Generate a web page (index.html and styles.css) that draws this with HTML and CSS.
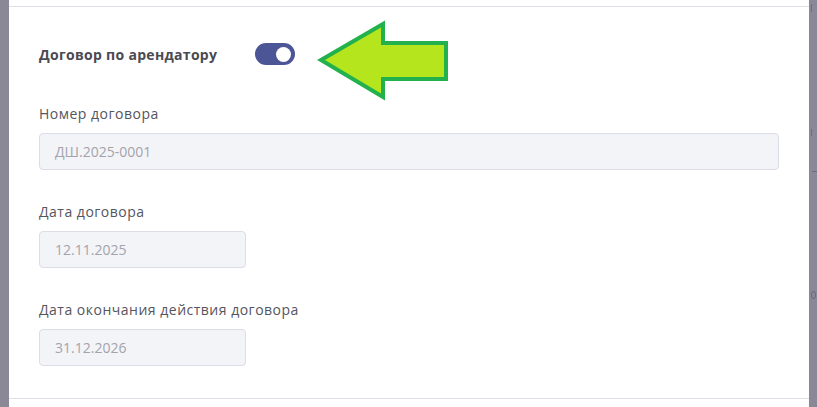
FILE: index.html
```html
<!DOCTYPE html>
<html lang="ru">
<head>
<meta charset="utf-8">
<link rel="stylesheet" href="styles.css">
</head>
<body>
<div class="backdrop">
  <div class="modal">
    <div class="modal-top"></div>
    <div class="modal-body">
      <div class="toggle-row">
        <span class="toggle-label">Договор по арендатору</span>
        <span class="switch"><span class="knob"></span></span>
      </div>
      <div class="field">
        <div class="label">Номер договора</div>
        <div class="input wide">ДШ.2025-0001</div>
      </div>
      <div class="field">
        <div class="label">Дата договора</div>
        <div class="input short">12.11.2025</div>
      </div>
      <div class="field">
        <div class="label">Дата окончания действия договора</div>
        <div class="input short">31.12.2026</div>
      </div>
    </div>
    <div class="modal-bottom"></div>
  </div>
  <svg class="arrow" width="140" height="90" viewBox="0 0 140 90">
    <polygon points="5,42 67,6 67,25 130,25 130,61 67,61 67,79" fill="#b5e61d" stroke="#22b14c" stroke-width="4" stroke-linejoin="miter"/>
  </svg>
  <span class="bg-mark m1"></span>
  <span class="bg-mark m2"></span>
  <span class="bg-mark m3"></span>
  <span class="bg-mark m4"></span>
</div>
</body>
</html>
```
FILE: styles.css
```css
html, body {
  margin: 0;
  padding: 0;
}
body {
  background: #8a8797;
  font-family: "Open Sans", "DejaVu Sans", sans-serif;
  width: 817px;
  height: 407px;
  overflow: hidden;
}
.backdrop {
  position: relative;
  width: 817px;
  height: 407px;
}
.modal {
  margin-left: 9px;
  width: 800px;
  height: 407px;
  background: #ffffff;
  display: flex;
  flex-direction: column;
}
.modal-top {
  height: 6px;
  border-bottom: 1px solid #dde1e6;
}
.modal-body {
  padding: 36px 30px 32px 30px;
  display: flex;
  flex-direction: column;
}
.toggle-row {
  display: flex;
  align-items: center;
  height: 22px;
  margin-bottom: 39px;
}
.toggle-label {
  font-weight: 700;
  font-size: 14px;
  letter-spacing: 0.3px;
  color: #4a4a52;
  width: 216px;
}
.switch {
  width: 40px;
  height: 22px;
  border-radius: 11px;
  background: #4c5596;
  display: flex;
  align-items: center;
  justify-content: flex-end;
  padding-right: 4px;
  box-sizing: border-box;
}
.knob {
  width: 15px;
  height: 15px;
  border-radius: 50%;
  background: #ffffff;
}
.field {
  display: flex;
  flex-direction: column;
  margin-bottom: 32px;
}
.field:last-child {
  margin-bottom: 0;
}
.label {
  font-size: 14px;
  line-height: 19px;
  letter-spacing: 0.5px;
  color: #55555e;
  margin-bottom: 10px;
}
.input {
  height: 37px;
  box-sizing: border-box;
  background: #f3f4f8;
  border: 1px solid #dcdde6;
  border-radius: 4px;
  padding-left: 15px;
  font-size: 14px;
  color: #a3a3ab;
  display: flex;
  align-items: center;
}
.wide {
  width: 740px;
}
.short {
  width: 207px;
}
.modal-bottom {
  border-top: 1px solid #dde1e6;
  flex: 1;
}
.arrow {
  position: absolute;
  left: 316px;
  top: 18px;
}
.bg-mark {
  position: absolute;
  background: #6f6b80;
}
.m1 { left: 811px; top: 4px; width: 1px; height: 8px; }
.m2 { left: 811px; top: 129px; width: 1px; height: 7px; }
.m3 { left: 812px; top: 171px; width: 5px; height: 1px; }
.m4 { left: 811px; top: 291px; width: 5px; height: 8px; background: transparent; border: 1px solid #6f6b80; border-radius: 50%; box-sizing: border-box; }
```
